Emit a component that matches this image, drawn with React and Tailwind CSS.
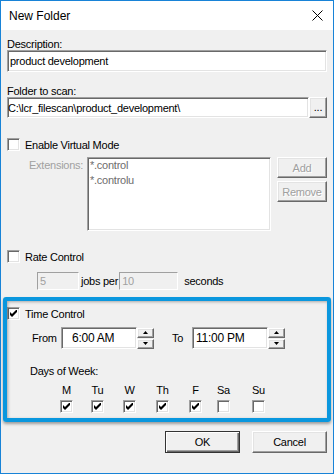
import React from 'react';

const sunken =
  "border border-t-[#a0a0a0] border-l-[#a0a0a0] border-r-white border-b-white shadow-[inset_1px_1px_0_#696969,inset_-1px_-1px_0_#e3e3e3]";
const raised =
  "border border-t-white border-l-white border-r-[#696969] border-b-[#696969] shadow-[inset_-1px_-1px_0_#a0a0a0,inset_1px_1px_0_#e3e3e3] bg-[#f0f0f0]";
const flat =
  "border border-t-[#a0a0a0] border-l-[#a0a0a0] border-r-white border-b-white bg-[#f0f0f0]";

const Check = ({ on }) => (
  <div className={`w-[13px] h-[13px] bg-white shrink-0 flex items-center justify-center ${sunken}`}>
    {on && (
      <svg width="7" height="7" viewBox="0 0 7 7">
        <polygon points="0,2 2,4 7,-1 7,2 2,7 0,5" fill="#000" />
      </svg>
    )}
  </div>
);

const Arrow = ({ up }) => (
  <svg width="5" height="3" viewBox="0 0 5 3">
    <polygon points={up ? "2.5,0 5,3 0,3" : "0,0 5,0 2.5,3"} fill="#000" />
  </svg>
);

const Spinner = ({ value, pad }) => (
  <div className="flex items-center">
    <div className={`w-[76px] h-[22px] bg-white flex items-center text-[12px] ${pad} ${sunken}`}>{value}</div>
    <div className="w-[17px] flex flex-col gap-[1px]">
      <div className={`h-[10px] flex items-center justify-center ${raised}`}><Arrow up /></div>
      <div className={`h-[10px] flex items-center justify-center ${raised}`}><Arrow /></div>
    </div>
  </div>
);

const days = [
  { d: "M", on: true, ml: "ml-[53px]" },
  { d: "Tu", on: true, ml: "ml-[18px]" },
  { d: "W", on: true, ml: "ml-[19px]" },
  { d: "Th", on: true, ml: "ml-[20px]" },
  { d: "F", on: true, ml: "ml-[20px]" },
  { d: "Sa", on: false, ml: "ml-[15px]" },
  { d: "Su", on: false, ml: "ml-[22px]" },
];

const App = () => {
  return (
    <div className="w-[334px] h-[474px] border border-[#1883d7] flex flex-col bg-[#f0f0f0] text-black text-[11px] leading-[12px] tracking-[-0.25px] font-['Liberation_Sans',Arial,sans-serif]">
      {/* Title bar */}
      <div className="h-[29px] bg-white flex items-center justify-between pl-[8px] pr-[10px]">
        <span className="text-[12px] tracking-normal">New Folder</span>
        <svg width="11" height="11" viewBox="0 0 11 11">
          <path d="M0.5 0.5 L10.5 10.5 M10.5 0.5 L0.5 10.5" stroke="#000" strokeWidth="1" />
        </svg>
      </div>

      <div className="flex-1 flex flex-col px-[6px] pt-[8px]">
        <div>Description:</div>
        <div className={`h-[22px] bg-white flex items-center pl-[2px] ${sunken}`}>product development</div>

        <div className="mt-[13px]">Folder to scan:</div>
        <div className="flex h-[21px]">
          <div className={`w-[302px] bg-white flex items-center ${sunken}`}>C:\lcr_filescan\product_development\</div>
          <div className={`flex-1 flex items-end justify-center pb-[4px] ${raised}`}>...</div>
        </div>

        <div className="mt-[20px] flex items-center gap-[5px]">
          <Check />
          <span>Enable Virtual Mode</span>
        </div>

        <div className="mt-[6px] flex">
          <div className="w-[80px] pl-[22px] pt-[2px] text-[#a0a0a0]">Extensions:</div>
          <div className={`w-[184px] h-[74px] bg-white pl-[2px] leading-[15px] text-[#6d6d6d] ${sunken}`}>
            <div>*.control</div>
            <div>*.controlu</div>
          </div>
          <div className="ml-[6px] flex-1 flex flex-col gap-[3px] text-[#a0a0a0] [text-shadow:1px_1px_0_#fff]">
            <div className={`h-[21px] flex items-center justify-center ${raised}`}>Add</div>
            <div className={`h-[21px] flex items-center justify-center ${raised}`}>Remove</div>
          </div>
        </div>

        <div className="mt-[19px] flex items-center gap-[5px]">
          <Check />
          <span>Rate Control</span>
        </div>

        <div className="mt-[9px] h-[18px] flex items-center pl-[30px]">
          <div className={`w-[42px] h-full flex items-center pl-[2px] text-[#a0a0a0] ${flat}`}>5</div>
          <span className="ml-[2px]">jobs per</span>
          <div className={`w-[59px] h-full ml-[1px] flex items-center pl-[2px] text-[#a0a0a0] ${flat}`}>10</div>
          <span className="ml-[6px]">seconds</span>
        </div>

        {/* Time Control (highlighted) */}
        <div className="mt-[7px] relative pt-[10px] pb-[9px]">
          <div className="absolute inset-y-0 -left-[4px] -right-[4px] border-4 border-[#0a97de] rounded-[3px] shadow-[0_2px_3px_rgba(0,0,0,0.35),inset_1px_1px_3px_rgba(0,0,0,0.3)] pointer-events-none" />
          <div className="flex items-center gap-[5px]">
            <Check on />
            <span>Time Control</span>
          </div>
          <div className="mt-[7px] flex items-center">
            <span className="ml-[25px] w-[29px]">From</span>
            <Spinner value="6:00 AM" pad="pl-[10px]" />
            <span className="ml-[18px] w-[20px]">To</span>
            <Spinner value="11:00 PM" pad="pl-[3px]" />
          </div>
          <div className="mt-[16px] pl-[23px]">Days of Week:</div>
          <div className="mt-[7px] flex">
            {days.map((x) => (
              <div key={x.d} className={`w-[13px] flex flex-col items-center ${x.ml}`}>
                <span className="whitespace-nowrap">{x.d}</span>
                <div className="mt-[4px]">
                  <Check on={x.on} />
                </div>
              </div>
            ))}
          </div>
        </div>

        <div className="mt-[9px] flex justify-end gap-[12px]">
          <div className="w-[75px] h-[22px] flex items-center justify-center border border-[#333] bg-[#f0f0f0] shadow-[inset_1px_1px_0_#fff,inset_-1px_-1px_0_#696969,inset_-2px_-2px_0_#a0a0a0]">OK</div>
          <div className={`w-[75px] h-[22px] flex items-center justify-center ${raised}`}>Cancel</div>
        </div>
      </div>
    </div>
  );
};

export default App;
